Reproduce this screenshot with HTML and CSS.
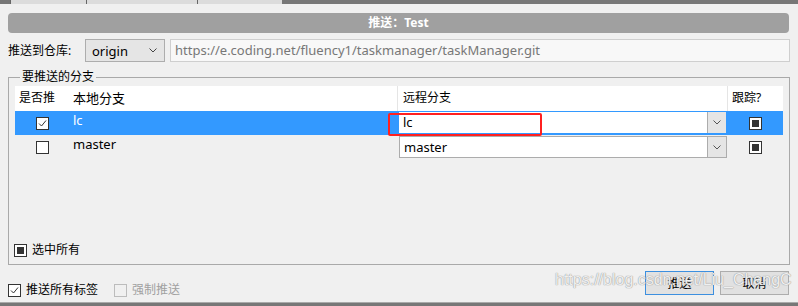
FILE: index.html
```html
<!doctype html>
<html>
  <head>
    <meta charset="UTF-8" />
    <title>推送：Test</title>
    <link rel="stylesheet" href="styles.css">
  </head>
  <body>
    <div class="topstrip">
      <div class="toolbar">
        <span class="tb"></span>
        <span class="tb wide"></span>
        <span class="tb"></span>
      </div>
    </div>
    <div class="dialog">
      <div class="titlebar">推送：Test</div>

      <div class="repo-row">
        <span class="repo-label">推送到仓库:</span>
        <div class="combo origin">
          <span class="combo-text">origin</span>
          <svg class="chev" width="8" height="5" viewBox="0 0 8 5"><path d="M0.5 0.5 L4 4 L7.5 0.5" fill="none" stroke="#444" stroke-width="1"/></svg>
        </div>
        <div class="url">https://e.coding.net/fluency1/taskmanager/taskManager.git</div>
      </div>

      <fieldset class="branches">
        <legend>要推送的分支</legend>
        <div class="fs-body">
          <div class="grid">
            <div class="row head">
              <div class="cell c1">是否推</div>
              <div class="cell c2">本地分支</div>
              <div class="cell c3">远程分支</div>
              <div class="cell c4">跟踪?</div>
            </div>
            <div class="row selected">
              <div class="cell c1 center"><span class="cb checked"><svg width="11" height="11" viewBox="0 0 11 11"><path d="M2 5.5 L4.5 8 L9 2.5" fill="none" stroke="#333" stroke-width="1"/></svg></span></div>
              <div class="cell c2">lc</div>
              <div class="cell c3">
                <div class="remote active">
                  <span class="remote-text">lc</span>
                  <span class="drop"><svg width="8" height="5" viewBox="0 0 8 5"><path d="M0.5 0.5 L4 4 L7.5 0.5" fill="none" stroke="#555" stroke-width="1"/></svg></span>
                </div>
              </div>
              <div class="cell c4 center"><span class="cb mixed"></span></div>
            </div>
            <div class="row">
              <div class="cell c1 center"><span class="cb"></span></div>
              <div class="cell c2">master</div>
              <div class="cell c3">
                <div class="remote">
                  <span class="remote-text">master</span>
                  <span class="drop"><svg width="8" height="5" viewBox="0 0 8 5"><path d="M0.5 0.5 L4 4 L7.5 0.5" fill="none" stroke="#555" stroke-width="1"/></svg></span>
                </div>
              </div>
              <div class="cell c4 center"><span class="cb mixed"></span></div>
            </div>
            <div class="mark"></div>
          </div>
          <label class="check select-all"><span class="cb mixed"></span>选中所有</label>
        </div>
      </fieldset>

      <div class="footer">
        <div class="options">
          <label class="check"><span class="cb checked"><svg width="11" height="11" viewBox="0 0 11 11"><path d="M2 5.5 L4.5 8 L9 2.5" fill="none" stroke="#333" stroke-width="1"/></svg></span>推送所有标签</label>
          <label class="check disabled"><span class="cb"></span>强制推送</label>
        </div>
        <div class="buttons">
          <button class="btn default">推送</button>
          <button class="btn">取消</button>
        </div>
      </div>
    </div>
    <div class="watermark">https://blog.csdn.net/Liu_ChangC</div>
    <div class="bottombar"></div>
  </body>
</html>
```

FILE: styles.css
```css
body {
  font-family: "Noto Sans", "Noto Sans CJK SC", sans-serif;
  font-size: 12px;
  line-height: 16px;
  color: #000;
  margin: 0;
  background: #f0f0f0;
  width: 798px;
  height: 306px;
  overflow: hidden;
  position: relative;
}
.topstrip {
  height: 4px;
  background: #777;
}
.toolbar {
  display: flex;
  margin-left: 10px;
  width: 272px;
  height: 4px;
  background: #dcdcdc;
}
.tb {
  width: 75px;
  border-left: 1px solid #666;
}
.tb.wide {
  width: 110px;
}
.dialog {
  padding: 0 8px;
}
.titlebar {
  margin: 9px 1px 0 0;
  height: 20px;
  line-height: 20px;
  border-radius: 4px;
  background: #a0a0a0;
  color: #fff;
  font-weight: bold;
  text-align: center;
}
.repo-row {
  display: flex;
  align-items: center;
  margin-top: 6px;
  height: 23px;
}
.repo-label {
  width: 77px;
}
.combo {
  display: flex;
  align-items: center;
  justify-content: space-between;
  box-sizing: border-box;
  height: 23px;
  border: 1px solid #adadad;
  background: #e5e5e5;
  padding: 0 7px 0 6px;
}
.combo.origin {
  width: 80px;
  font-size: 13px;
}
.url {
  flex: 1;
  margin-left: 5px;
  box-sizing: border-box;
  height: 23px;
  line-height: 21px;
  border: 1px solid #cfcfcf;
  background: #f8f8f8;
  color: #777;
  padding: 0 4px;
  font-size: 13px;
}
.branches {
  margin: 7px 0 0;
  padding: 0 6px;
  border: 1px solid #a9a9a9;
  min-width: 0;
}
.branches legend {
  padding: 0 2px;
  margin-left: 5px;
  line-height: 16px;
}
.fs-body {
  display: flex;
  flex-direction: column;
  justify-content: space-between;
  height: 179px;
}
.grid {
  position: relative;
  display: grid;
  grid-template-columns: 55px 328px 330px 55px;
  margin-top: 1px;
}
.row {
  display: contents;
}
.cell {
  display: flex;
  align-items: center;
  height: 24px;
  box-sizing: border-box;
}
.row.head .cell {
  background: #fff;
  height: 25px;
  padding-bottom: 2px;
}
.row.head .c1 { padding-left: 4px; }
.row.head .c2 { padding-left: 3px; border-right: 1px solid #e5e5e5; }
.row.head .c3 { padding-left: 5px; border-right: 1px solid #e5e5e5; }
.row.head .c4 { padding-left: 4px; }
.c2 {
  padding-left: 3px;
  padding-bottom: 6px;
  font-size: 13px;
}
.center {
  justify-content: center;
}
.row.selected .cell {
  background: #3399ff;
  color: #fff;
}
.remote {
  flex: 1;
  display: flex;
  box-sizing: border-box;
  height: 22px;
  margin: 0 1px;
  border: 1px solid #acacac;
  background: #fff;
  color: #000;
  font-size: 13px;
}
.remote.active {
  height: 23px;
  margin: 0 1px 1px 0;
  border-color: #3399ff;
}
.remote-text {
  flex: 1;
  padding-left: 4px;
  line-height: 20px;
}
.drop {
  width: 18px;
  display: flex;
  align-items: center;
  justify-content: center;
  background: #e5e5e5;
  border-left: 1px solid #acacac;
}
.cb {
  display: inline-flex;
  align-items: center;
  justify-content: center;
  width: 13px;
  height: 13px;
  box-sizing: border-box;
  border: 1px solid #333;
  background: #fff;
}
.cb.mixed::after {
  content: "";
  width: 7px;
  height: 7px;
  background: #333;
}
.check {
  display: inline-flex;
  align-items: center;
  gap: 5px;
}
.select-all {
  margin-left: -1px;
  margin-bottom: 6px;
}
.mark {
  position: absolute;
  left: 373px;
  top: 27px;
  width: 154px;
  height: 23px;
  box-sizing: border-box;
  border: 2px solid #ff2020;
  border-radius: 2px;
}
.footer {
  display: flex;
  justify-content: space-between;
  margin-top: 6px;
  margin-right: 1px;
}
.options {
  display: flex;
  gap: 16px;
  align-self: flex-end;
  margin-bottom: -3px;
}
.check.disabled {
  color: #a0a0a0;
}
.check.disabled .cb {
  border-color: #bcbcbc;
  background: #f0f0f0;
}
.buttons {
  display: flex;
  gap: 6px;
}
.btn {
  width: 69px;
  height: 24px;
  padding: 0;
  border: 1px solid #adadad;
  background: #e1e1e1;
  font-family: inherit;
  font-size: 12px;
  color: #000;
}
.btn.default {
  border-color: #3c8fdf;
}
.watermark {
  position: absolute;
  left: 555px;
  top: 272px;
  font-family: "Liberation Sans", sans-serif;
  font-size: 16px;
  color: rgba(255, 255, 255, 0.85);
  text-shadow: 0 0 1px #999, 0 0 1px #999;
  pointer-events: none;
}
.bottombar {
  position: absolute;
  left: 0;
  bottom: 0;
  width: 100%;
  height: 3px;
  background: #777;
  border-top: 1px solid #aaa;
}
```
